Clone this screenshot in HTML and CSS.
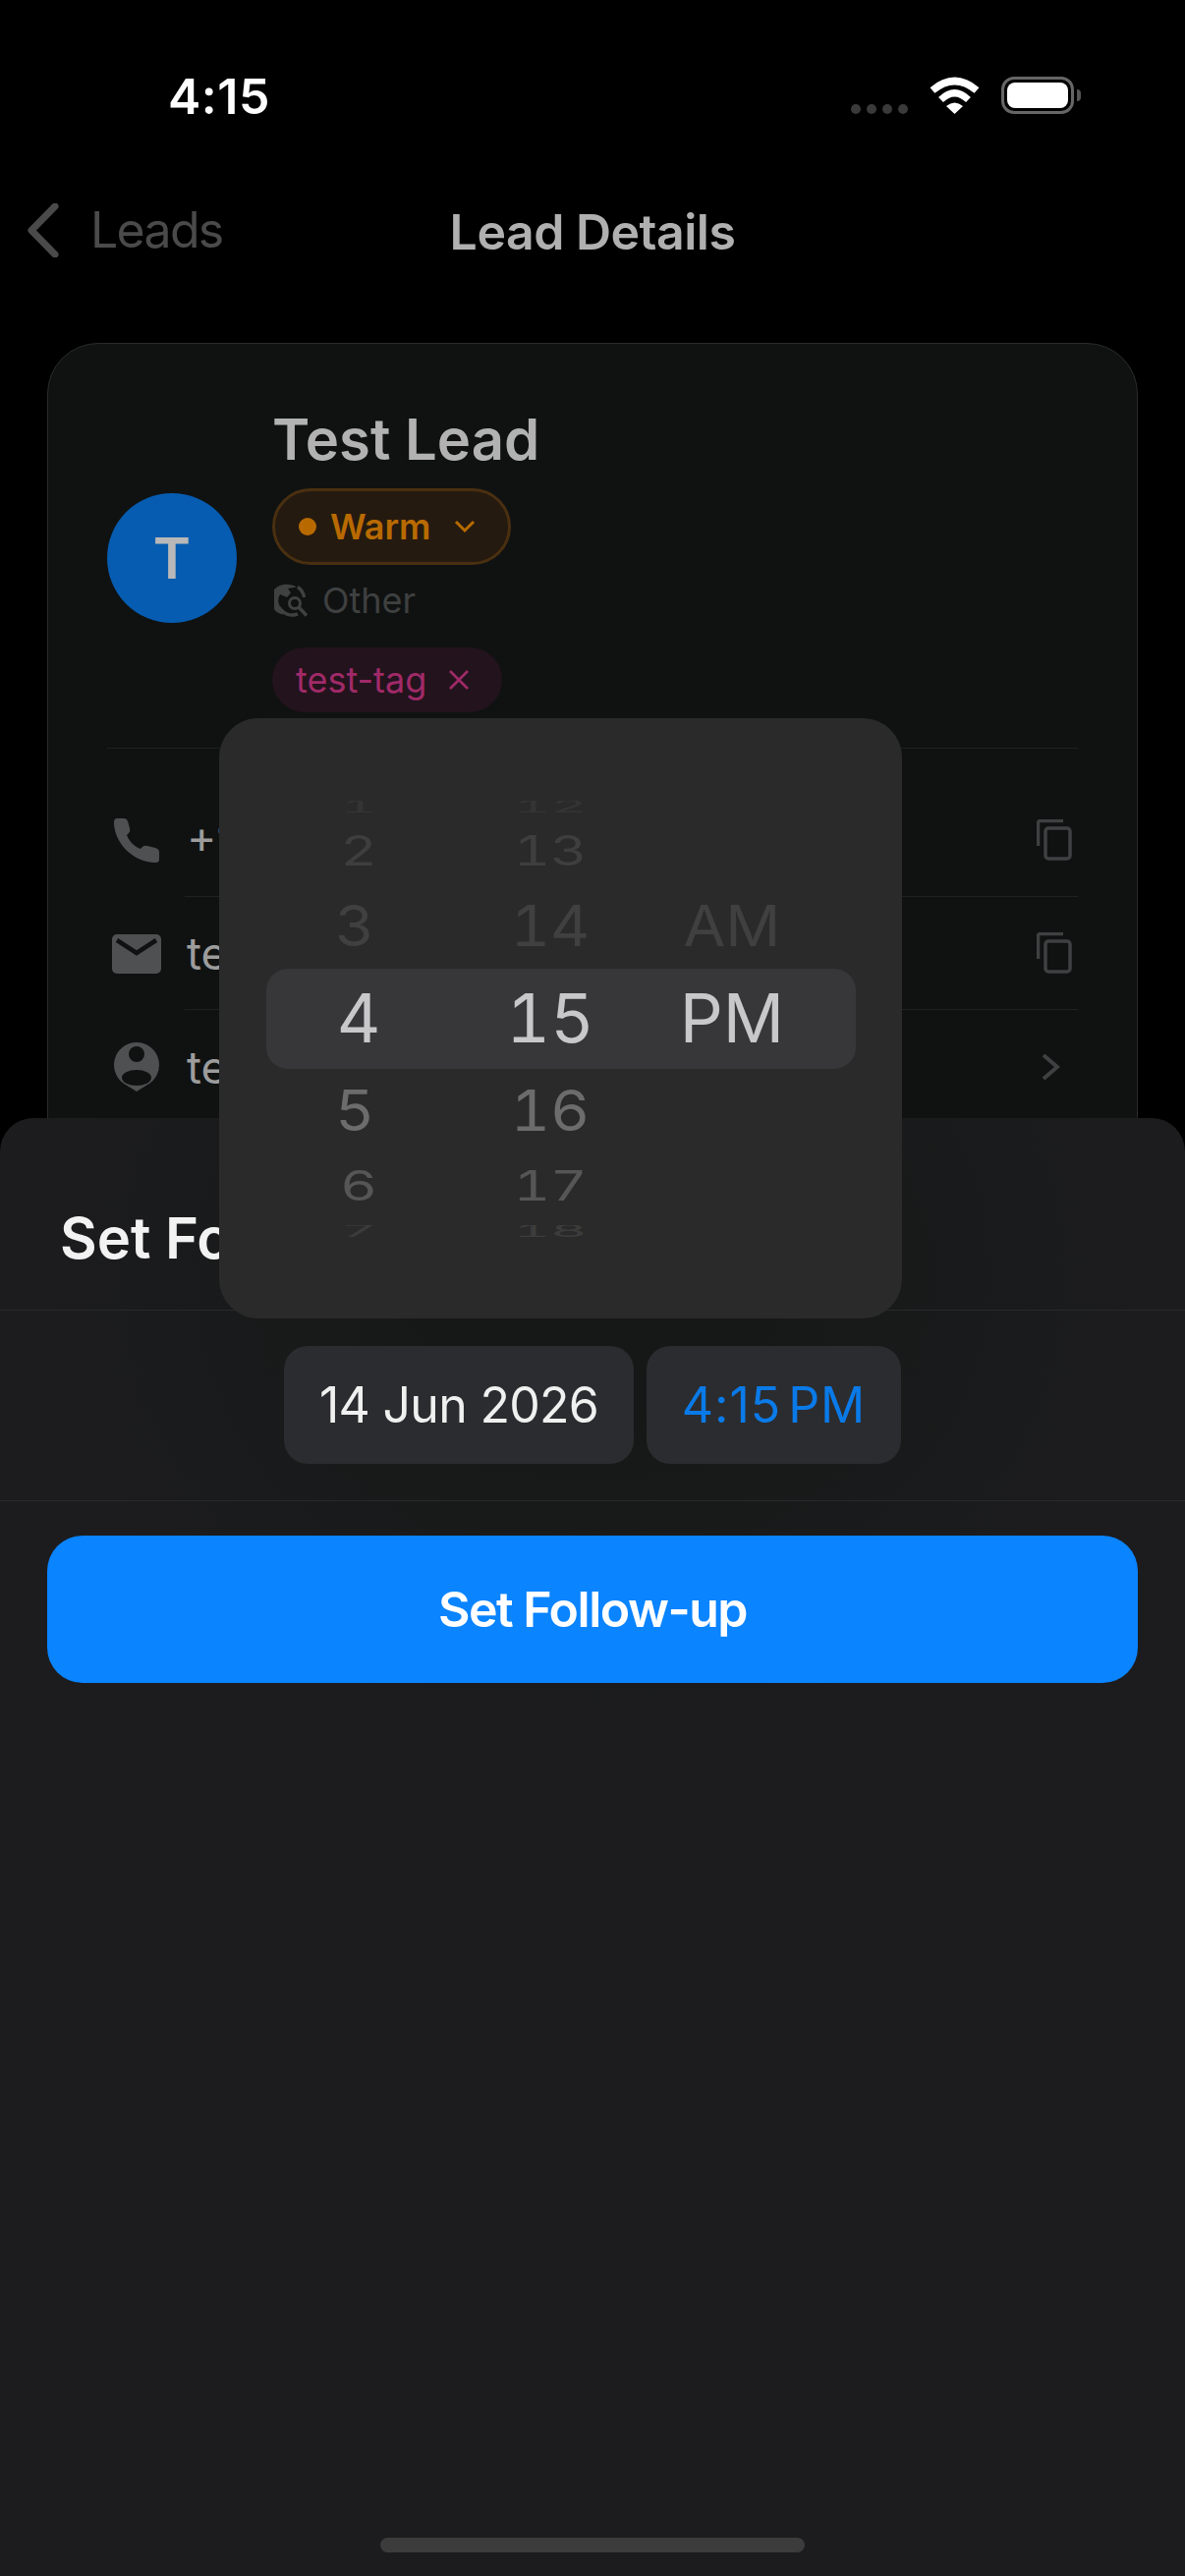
FILE: index.html
```html
<!DOCTYPE html>
<html lang="en">
<head>
<meta charset="utf-8">
<title>Lead Details</title>
<link rel="stylesheet" href="styles.css">
</head>
<body>
<div class="screen">
  <header class="status">
    <span class="clock">4:15</span>
    <div class="status-right">
      <div class="signal"><i></i><i></i><i></i><i></i></div>
      <svg class="wifi" width="51" height="38" viewBox="0 0 51 38"><path d="M3 14Q25.500-5 48 14" fill="none" stroke="#fff" stroke-width="7.500"/><path d="M11.500 23.500Q25.500 10 39.500 23.500" fill="none" stroke="#fff" stroke-width="7"/><path d="M17 30Q25.500 23 34 30L25.500 38Z" fill="#fff"/></svg>
      <div class="battery"><div class="battery-fill"></div></div>
      <div class="battery-tip"></div>
    </div>
  </header>

  <nav class="nav">
    <div class="back">
      <svg width="33" height="55" viewBox="0 0 33 55"><path d="M29 3 5 27.500 29 52" fill="none" stroke="#4a4a4a" stroke-width="7" stroke-linecap="round" stroke-linejoin="round"/></svg>
      <span>Leads</span>
    </div>
    <h1 class="nav-title">Lead Details</h1>
  </nav>

  <section class="card">
    <div class="lead-head">
      <div class="avatar">T</div>
      <div class="lead-info">
        <div class="lead-name">Test Lead</div>
        <div class="status-pill">
          <span class="status-dot"></span><span>Warm</span>
          <svg width="22" height="14" viewBox="0 0 22 14"><path d="M2 2l9 9 9-9" fill="none" stroke="#b86a00" stroke-width="3"/></svg>
        </div>
        <div class="source">
          <svg width="34" height="34" viewBox="0 0 34 34"><path d="M15 1A15.500 15.500 0 0 0 9 31.500L11 28A12 12 0 0 1 6 11L13 14 17 9.500 14 5 23 3.500A15.500 15.500 0 0 0 15 1Z" fill="#3f4040"/><path d="M5 24A15.500 15.500 0 0 0 24 31" fill="none" stroke="#3f4040" stroke-width="3.500"/><path d="M24 3.500A15.500 15.500 0 0 1 30.500 14" fill="none" stroke="#3f4040" stroke-width="3.500"/><circle cx="21" cy="20" r="5.500" fill="none" stroke="#3f4040" stroke-width="3"/><path d="M25 24l8 8.500" stroke="#3f4040" stroke-width="3.500"/></svg>
          <span>Other</span>
        </div>
        <div class="tag">
          <span>test-tag</span>
          <svg width="22" height="20" viewBox="0 0 22 20"><path d="M2 1l18 18M20 1 2 19" stroke="#a02a68" stroke-width="2.600"/></svg>
        </div>
      </div>
    </div>
    <div class="contact-list">
      <div class="contact-row">
        <svg class="contact-icon" width="50" height="46" viewBox="-2 0 50 46"><path d="M3 0H10Q13 0 14 3L16 10Q17 13 15 15L13 17C15 22 19 28 27 31L29 29Q31 27 34 28L42 30Q46 31 46 34V42Q46 45 42 45C20 45 0 25 0 4Q0 0 3 0Z" fill="#4f5052"/></svg>
        <div class="contact-body"><span class="contact-text">+1 555</span>
          <svg width="36" height="42" viewBox="0 0 36 42"><path d="M1.500 27V4Q1.500 1.500 4 1.500H27" fill="none" stroke="#3f4041" stroke-width="3.500"/><rect x="9" y="9" width="25" height="31" rx="3" fill="none" stroke="#3f4041" stroke-width="3.500"/></svg>
        </div>
      </div>
      <div class="contact-row">
        <svg class="contact-icon" width="50" height="40" viewBox="0 0 50 40"><rect width="50" height="40" rx="5" fill="#4f5052"/><path d="M5 6 25 19 45 6" fill="none" stroke="#101212" stroke-width="4.500"/></svg>
        <div class="contact-body"><span class="contact-text">test</span>
          <svg width="36" height="42" viewBox="0 0 36 42"><path d="M1.500 27V4Q1.500 1.500 4 1.500H27" fill="none" stroke="#3f4041" stroke-width="3.500"/><rect x="9" y="9" width="25" height="31" rx="3" fill="none" stroke="#3f4041" stroke-width="3.500"/></svg>
        </div>
      </div>
      <div class="contact-row">
        <svg class="contact-icon" width="50" height="50" viewBox="-2 0 50 50"><path d="M23 0A23 23 0 0 1 33 43.700L23 50 13 43.700A23 23 0 0 1 23 0Z" fill="#4f5052"/><circle cx="23" cy="12" r="8" fill="#101212"/><ellipse cx="23" cy="36" rx="15" ry="8" fill="#101212"/></svg>
        <div class="contact-body contact-last"><span class="contact-text">test</span>
          <svg class="contact-arrow" width="19" height="28" viewBox="0 0 19 28"><path d="M2 2l14 12L2 26" fill="none" stroke="#3f4041" stroke-width="4"/></svg>
        </div>
      </div>
    </div>
  </section>

  <section class="sheet">
    <h2 class="sheet-title">Set Follow-up</h2>
    <div class="chips">
      <div class="chip chip-date">14 Jun 2026</div>
      <div class="chip chip-time">4:15 PM</div>
    </div>
    <button class="primary">Set Follow-up</button>
    <div class="home-bar"></div>
  </section>

  <div class="picker">
    <div class="picker-band"></div>
    <div class="wheel">
      <div class="wheel-col hours">
        <div class="cell far"><span>1</span></div>
        <div class="cell near2"><span>2</span></div>
        <div class="cell near3"><span>3</span></div>
        <div class="cell sel"><span>4</span></div>
        <div class="cell below5"><span>5</span></div>
        <div class="cell below6"><span>6</span></div>
        <div class="cell far bottom"><span>7</span></div>
      </div>
      <div class="wheel-col">
        <div class="cell far"><span>12</span></div>
        <div class="cell near2"><span>13</span></div>
        <div class="cell near3"><span>14</span></div>
        <div class="cell sel"><span>15</span></div>
        <div class="cell below5"><span>16</span></div>
        <div class="cell below6"><span>17</span></div>
        <div class="cell far bottom"><span>18</span></div>
      </div>
      <div class="wheel-col">
        <div class="cell far"></div>
        <div class="cell near2"></div>
        <div class="cell near3"><span>AM</span></div>
        <div class="cell sel"><span>PM</span></div>
      </div>
    </div>
  </div>
</div>
</body>
</html>
```

FILE: styles.css
```css
* { box-sizing: border-box; margin: 0; padding: 0; }
html, body { background: #000; }
body { font-family: Inter, "Liberation Sans", sans-serif; }

.screen {
  position: relative;
  width: 1206px;
  height: 2622px;
  overflow: hidden;
  background: #000;
}

/* status bar */
.status {
  height: 160px;
  padding: 68px 106px 0 171px;
  display: flex;
  justify-content: space-between;
  align-items: flex-start;
}
.clock { font-size: 50px; font-weight: 600; line-height: 60px; color: #fff; letter-spacing: 0.500px; }
.status-right { display: flex; align-items: flex-start; padding-top: 10px; }
.signal { display: flex; gap: 6px; margin-top: 28px; margin-right: 22px; }
.signal i { width: 10px; height: 10px; border-radius: 50%; background: #3a3a3a; }
.wifi { margin-right: 22px; }
.battery {
  width: 74px;
  height: 38px;
  border: 3px solid #666;
  border-radius: 13px;
  padding: 3px;
}
.battery-fill { width: 100%; height: 100%; background: #fff; border-radius: 8px; }
.battery-tip {
  width: 4px;
  height: 12px;
  margin: 13px 0 0 3px;
  background: #555;
  border-radius: 0 4px 4px 0;
}

/* nav */
.nav {
  position: relative;
  height: 150px;
  display: flex;
  align-items: center;
  justify-content: center;
}
.back {
  position: absolute;
  left: 27px;
  top: 47px;
  display: flex;
  align-items: center;
  gap: 32px;
  font-size: 50px;
  letter-spacing: -1.700px;
  color: #4a4a4a;
  line-height: 55px;
}
.nav-title { font-size: 50px; font-weight: 600; letter-spacing: -0.500px; color: #b0b0b0; line-height: 60px; margin-top: 1px; }

/* card */
.card {
  margin: 39px 48px 0;
  height: 900px;
  padding: 61px 60px 0;
  background: #101212;
  border: 1px solid #2a2b2b;
  border-radius: 52px;
}
.lead-head {
  display: flex;
  align-items: center;
  gap: 36px;
  padding-bottom: 36px;
  border-bottom: 1px solid #1f2020;
}
.avatar {
  width: 132px;
  height: 132px;
  border-radius: 50%;
  background: #065cb0;
  color: #b8b8b8;
  font-size: 58px;
  font-weight: 600;
  display: flex;
  align-items: center;
  justify-content: center;
}
.lead-info { display: flex; flex-direction: column; align-items: flex-start; }
.lead-name { font-size: 58px; font-weight: 600; color: #b2b2b2; line-height: 72px; margin-bottom: 14px; }
.status-pill {
  height: 78px;
  width: 243px;
  display: flex;
  align-items: center;
  padding-left: 24px;
  gap: 14px;
  background: #251a10;
  border: 3px solid #4a3010;
  border-radius: 39px;
  color: #b86a00;
  font-size: 36px;
  font-weight: 600;
}
.status-pill svg { margin-left: 10px; }
.status-dot { width: 18px; height: 18px; border-radius: 50%; background: #b86a00; }
.source {
  display: flex;
  align-items: center;
  gap: 15px;
  height: 40px;
  margin: 16px 0 28px 2px;
  font-size: 36px;
  color: #3f4040;
}
.tag {
  height: 66px;
  width: 234px;
  display: flex;
  align-items: center;
  padding-left: 24px;
  gap: 22px;
  background: #23131d;
  border-radius: 33px;
  color: #a02a68;
  font-size: 36px;
}

/* contact rows */
.contact-list { padding-top: 36px; }
.contact-row { display: flex; align-items: center; height: 115px; }
.contact-icon { flex: none; margin: 0 24px 0 5px; }
.contact-body {
  flex: 1;
  height: 115px;
  display: flex;
  align-items: center;
  justify-content: space-between;
  padding-right: 6px;
  border-bottom: 1px solid #1f2020;
  font-size: 46px;
  color: #9c9c9c;
}
.contact-last { border-bottom: none; padding-right: 18px; }
.contact-text { padding-left: 2px; }

/* sheet */
.sheet {
  position: absolute;
  left: 0;
  right: 0;
  top: 1138px;
  bottom: 0;
  background:
    radial-gradient(ellipse 560px 480px at 50% 160px, #161817 30%, rgba(22, 24, 23, 0) 100%),
    #1c1c1e;
  border-radius: 34px 34px 0 0;
}
.sheet-title {
  height: 196px;
  padding: 86px 0 0 61px;
  font-size: 58px;
  font-weight: 600;
  line-height: 72px;
  color: #f2f2f2;
  border-bottom: 1px solid #28292b;
}
.chips {
  height: 194px;
  padding-bottom: 2px;
  display: flex;
  align-items: center;
  justify-content: center;
  gap: 13px;
  border-bottom: 1px solid #28292b;
}
.chip {
  height: 120px;
  border-radius: 24px;
  background: #2b2c2f;
  display: flex;
  align-items: center;
  justify-content: center;
  font-size: 50px;
}
.chip-date { width: 356px; color: #f0f0f0; letter-spacing: -0.700px; }
.chip-time { width: 259px; color: #0a7ae8; word-spacing: -8px; letter-spacing: 1px; }
.primary {
  display: block;
  width: 1110px;
  height: 150px;
  margin: 35px 48px 0;
  border: none;
  border-radius: 36px;
  background: #0a84ff;
  color: #fff;
  font-family: inherit;
  font-size: 50px;
  font-weight: 600;
  letter-spacing: -1.500px;
}
.home-bar {
  position: absolute;
  left: 387px;
  bottom: 24px;
  width: 432px;
  height: 15px;
  border-radius: 8px;
  background: #3c3c3c;
}

/* time picker popover */
.picker {
  position: absolute;
  left: 223px;
  top: 731px;
  width: 695px;
  height: 611px;
  padding: 84px 0 0 48px;
  background: #2a2a2a;
  border-radius: 40px;
}
.picker-band {
  position: absolute;
  left: 48px;
  top: 255px;
  width: 600px;
  height: 102px;
  background: #37373a;
  border-radius: 22px;
}
.wheel {
  position: relative;
  display: grid;
  grid-template-columns: 188px 202px 168px;
}
.wheel-col { display: flex; flex-direction: column; }
.cell {
  display: flex;
  align-items: center;
  justify-content: center;
  overflow: hidden;
  line-height: 1;
  white-space: nowrap;
  font-variant-numeric: tabular-nums;
}
.cell span { display: block; }
.far { height: 12px; line-height: 12px; font-size: 58px; color: #343434; }
.far span { transform: scaleY(0.3); }
.bottom { margin-top: 4px; color: #3c3c3c; }
.near2 { height: 78px; font-size: 58px; color: #3e3e3e; }
.near2 span { transform: scaleY(0.72); }
.near3 { height: 76px; font-size: 62px; color: #404040; }
.near3 span { transform: scaleY(0.93); }
.sel { height: 110px; font-size: 69px; color: #c8c8ca; }
.below5 { height: 80px; font-size: 62px; color: #6c6c6c; }
.below5 span { transform: scaleY(0.93); }
.below6 { height: 72px; font-size: 58px; color: #565656; }
.below6 span { transform: scaleY(0.72); }
.hours .near3 span, .hours .below5 span { margin-right: 8px; }
```
